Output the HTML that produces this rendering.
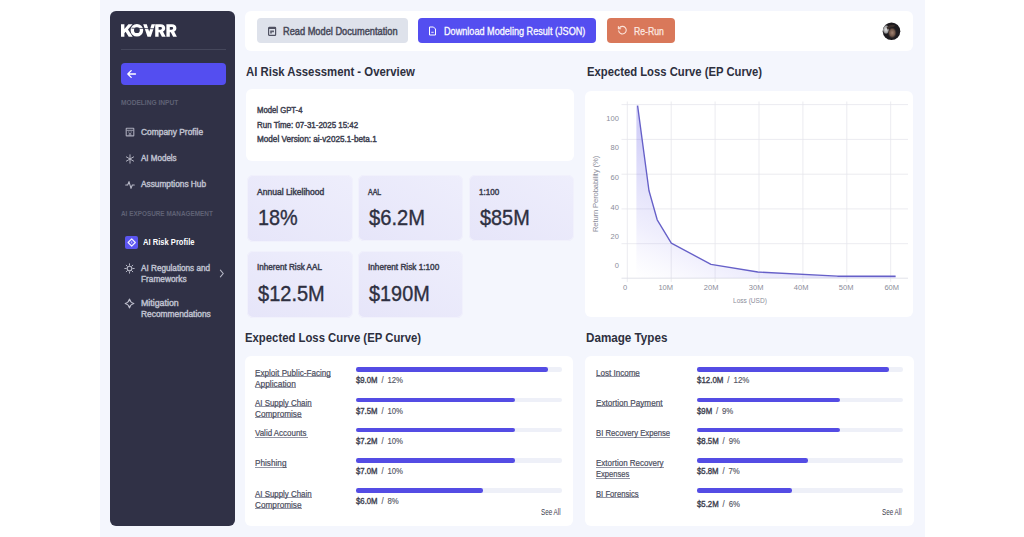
<!DOCTYPE html>
<html><head><meta charset="utf-8">
<style>
*{box-sizing:border-box;margin:0;padding:0}
html,body{width:1024px;height:537px;overflow:hidden;background:#fff;font-family:"Liberation Sans",sans-serif}
.a{position:absolute}
.t{position:absolute;white-space:nowrap;line-height:1;transform-origin:0 0}
.card{position:absolute;background:#fff;border-radius:6px}
.btn{position:absolute;border-radius:4px}
.mc{position:absolute;border-radius:6px;background:linear-gradient(30deg,#e6e5f9 0%,#eeeefc 100%);box-shadow:inset 0 0 0 1px #f1f1fc}
.track{position:absolute;height:4.4px;border-radius:2.2px;background:#eef0f8}
.fill{position:absolute;left:0;top:0;height:4.4px;border-radius:2.2px;background:#544ce4}
</style></head><body>
<div class="a" style="left:100px;top:0;width:825px;height:537px;background:#f4f6fd"></div>
<div class="a" style="left:110px;top:11px;width:125px;height:515px;background:#303146;border-radius:6px"></div>
<!-- logo -->
<svg class="a" style="left:118px;top:21px" width="64" height="20" viewBox="118 21 64 20">
<g fill="#fff">
<path d="M121 24.2h3.4v4.9l4-4.9h4.1l-4.5 5.3 4.7 7.2h-4l-3.1-4.9-1.2 1.4v3.5H121z"/>
<path fill-rule="evenodd" d="M136.9 23.9a6.3 6.3 0 1 1 0 12.6a6.3 6.3 0 1 1 0-12.6zM136.9 27.3a2.9 2.9 0 1 0 0 5.8a2.9 2.9 0 1 0 0-5.8z"/>
<path d="M143.2 24.2h3.6l2.4 7.6 2.4-7.6h3.5l-4.3 12.5h-3.3z"/>
<path d="M155.2 24.2h5.5c2.8 0 4.5 1.4 4.5 3.9 0 1.7-.8 2.9-2.2 3.5l2.7 5.1h-3.8l-2.3-4.5h-1v4.5h-3.4zm3.4 2.7v2.8h1.8c1 0 1.5-.5 1.5-1.4s-.5-1.4-1.5-1.4z"/>
<path d="M166.4 24.2h5.5c2.8 0 4.5 1.4 4.5 3.9 0 1.7-.8 2.9-2.2 3.5l2.7 5.1h-3.8l-2.3-4.5h-1v4.5h-3.4zm3.4 2.7v2.8h1.8c1 0 1.5-.5 1.5-1.4s-.5-1.4-1.5-1.4z"/>
</g>
<path d="M131.5 28.2 L154.5 28.8" stroke="#303146" stroke-width="0.8"/>
</svg>
<div class="a" style="left:121px;top:49px;width:105px;height:1px;background:#45475b"></div>
<div class="a" style="left:121px;top:63px;width:105px;height:22px;border-radius:4px;background:#544ef0"></div>
<svg class="a" style="left:126px;top:69px" width="11" height="10" viewBox="0 0 11 10"><path d="M9.5 5H2M5.2 1.6L1.8 5l3.4 3.4" fill="none" stroke="#fff" stroke-width="1.3" stroke-linecap="round" stroke-linejoin="round"/></svg>
<svg class="a" style="left:125px;top:127px" width="10" height="10" viewBox="0 0 10 10"><rect x="1.2" y="1.3" width="7.6" height="7.6" rx="0.5" fill="none" stroke="#a9aaba" stroke-width="1.1"/><path d="M1.5 3.3h7" stroke="#a9aaba" stroke-width="0.9"/><path d="M3.2 5h1.2M5.6 5h1.2M4.2 8.8V6.6h1.6v2.2" fill="none" stroke="#a9aaba" stroke-width="0.9"/></svg>
<svg class="a" style="left:125px;top:154px" width="10" height="10" viewBox="0 0 10 10"><path d="M5 0.8v8.4M1.4 2.9l7.2 4.2M8.6 2.9L1.4 7.1" stroke="#b9bac8" stroke-width="0.95" fill="none" stroke-linecap="round"/></svg>
<svg class="a" style="left:125px;top:180px" width="10" height="10" viewBox="0 0 10 10"><path d="M0.7 5h2l1.3-3.4 2 6.8 1.3-3.4h2" stroke="#b9bac8" stroke-width="1.05" fill="none" stroke-linejoin="round" stroke-linecap="round"/></svg>
<div class="a" style="left:125px;top:236px;width:13px;height:13px;border-radius:2px;background:#5b55f0"></div>
<svg class="a" style="left:125px;top:236px" width="13" height="13" viewBox="0 0 13 13"><path d="M6.7 2.9L10.3 6.5 6.7 10.1 3.1 6.5Z" fill="none" stroke="#f2f1ff" stroke-width="1.25" stroke-linejoin="round"/><path d="M6.7 5.4v2" stroke="#e0deff" stroke-width="0.8"/></svg>
<svg class="a" style="left:124px;top:263px" width="11" height="11" viewBox="0 0 11 11"><circle cx="5.5" cy="5.5" r="2.3" fill="none" stroke="#b4b5c4" stroke-width="1.1"/><path d="M5.5 0.8v1.4M5.5 8.8v1.4M0.8 5.5h1.4M8.8 5.5h1.4M2.2 2.2l1 1M7.8 7.8l1 1M8.8 2.2l-1 1M3.2 7.8l-1 1" stroke="#b4b5c4" stroke-width="1" stroke-linecap="round"/></svg>
<svg class="a" style="left:219px;top:269px" width="6" height="9" viewBox="0 0 6 9"><path d="M1.4 1.2l2.8 3.3-2.8 3.3" stroke="#b4b5c4" stroke-width="1.1" fill="none" stroke-linecap="round"/></svg>
<svg class="a" style="left:124px;top:298px" width="11" height="11" viewBox="0 0 11 11"><path d="M5.5 1.2Q6.3 4.7 9.8 5.5Q6.3 6.3 5.5 9.8Q4.7 6.3 1.2 5.5Q4.7 4.7 5.5 1.2Z" fill="none" stroke="#bdbecc" stroke-width="1.2" stroke-linejoin="round"/></svg>

<!-- top bar -->
<div class="card" style="left:245px;top:11px;width:668px;height:40px"></div>
<div class="btn" style="left:257px;top:18px;width:151px;height:25px;background:#dee2eb"></div>
<div class="btn" style="left:418px;top:18px;width:178px;height:25px;background:#544ef0"></div>
<div class="btn" style="left:607px;top:18px;width:68px;height:25px;background:#d9785a"></div>
<svg class="a" style="left:267px;top:26px" width="10" height="10" viewBox="0 0 10 10"><rect x="1.6" y="1.4" width="7" height="8" rx="0.7" fill="none" stroke="#505262" stroke-width="1.2"/><path d="M1.6 2.3h7" stroke="#505262" stroke-width="1.4"/><path d="M3.2 4.6h3.8v1.6H4.8v1.4H3.2z" fill="#5d5f6e"/></svg>
<svg class="a" style="left:428px;top:26px" width="9" height="10" viewBox="0 0 9 10"><path d="M1.5 1h4l2 2v6h-6z" fill="none" stroke="#fff" stroke-width="1"/><path d="M3.3 6.3h2.4" stroke="#fff" stroke-width="0.9"/></svg>
<svg class="a" style="left:617px;top:25px" width="11" height="11" viewBox="0 0 11 11"><path d="M2.2 3.2A3.8 3.8 0 1 1 1.7 5.8" fill="none" stroke="#fbe3da" stroke-width="1.1" stroke-linecap="round"/><path d="M1.4 1.6v2.2h2.2" fill="none" stroke="#fbe3da" stroke-width="1.1" stroke-linecap="round" stroke-linejoin="round"/></svg>
<svg class="a" style="left:882px;top:22px" width="19" height="19" viewBox="0 0 19 19">
<defs><clipPath id="avc"><circle cx="9.5" cy="9.3" r="8.8"/></clipPath>
<radialGradient id="avf" cx="0.5" cy="0.5" r="0.5"><stop offset="0" stop-color="#a08272"/><stop offset="0.6" stop-color="#6e5548"/><stop offset="1" stop-color="#3a2c28" stop-opacity="0"/></radialGradient>
<radialGradient id="avl" cx="0.5" cy="0.5" r="0.5"><stop offset="0" stop-color="#e8e8e8"/><stop offset="0.7" stop-color="#9a9a9c"/><stop offset="1" stop-color="#555" stop-opacity="0"/></radialGradient></defs>
<g clip-path="url(#avc)">
<rect width="19" height="19" fill="#1d1b1f"/>
<ellipse cx="4" cy="7.5" rx="3.6" ry="5" fill="url(#avl)"/>
<ellipse cx="10.2" cy="10.8" rx="4.6" ry="5.8" fill="url(#avf)"/>
<path d="M4.5 5.5Q8 1.5 13.5 3.5Q12 5.5 9 5.2Q7 6 6 8Z" fill="#3b302c"/>
</g>
</svg>

<!-- info card -->
<div class="card" style="left:246px;top:89px;width:328px;height:71.5px"></div>
<!-- metric cards -->
<div class="mc" style="left:246.5px;top:175px;width:106.5px;height:67px"></div>
<div class="mc" style="left:357.5px;top:175px;width:105.5px;height:66px"></div>
<div class="mc" style="left:468.5px;top:175px;width:105.5px;height:66px"></div>
<div class="mc" style="left:246.5px;top:251px;width:106.5px;height:67px"></div>
<div class="mc" style="left:357.5px;top:251px;width:105.5px;height:66.5px"></div>

<!-- chart card -->
<div class="card" style="left:585px;top:90.5px;width:328px;height:226.5px"></div>
<svg class="a" style="left:586px;top:90px" width="327" height="228" viewBox="586 90 327 228">
<defs>
<linearGradient id="gf" x1="0.75" y1="0" x2="0" y2="1">
<stop offset="0" stop-color="#6a62e6" stop-opacity="0.5"/>
<stop offset="0.5" stop-color="#7a73ea" stop-opacity="0.3"/>
<stop offset="0.8" stop-color="#8f89ee" stop-opacity="0.14"/>
<stop offset="1" stop-color="#a9a4f2" stop-opacity="0.0"/>
</linearGradient>
</defs>
<g stroke="#e6e6ec" stroke-width="0.8">
<path d="M621.5 104.6H908M621.5 139.4H908M621.5 174.2H908M621.5 208.9H908M621.5 243.7H908"/>
<path d="M627.3 101.5V282M671.2 101.5V282M715.1 101.5V282M759 101.5V282M802.9 101.5V282M846.8 101.5V282M890.7 101.5V282"/>
</g>
<path d="M621.5 278.2H908" stroke="#dedfe6" stroke-width="0.9"/>
<path d="M637.6 105.6L649 190.8 657.2 219.8 671.3 243.2 711 264.3 757.8 272 837.5 276.2 895.6 276.2V278H636.4V105.6Z" fill="url(#gf)"/>
<path d="M637.6 105.6L649 190.8 657.2 219.8 671.3 243.2 711 264.3 757.8 272 837.5 276.2 895.6 276.2" fill="none" stroke="#6660c8" stroke-width="1.35" stroke-linejoin="round"/>
</svg>
<div class="t" style="left:595.5px;top:193.6px;font-size:7.6px;color:#8b8d9a;transform:translate(-50%,-50%) rotate(-90deg);transform-origin:50% 50%;letter-spacing:-0.1px">Return Perobability (%)</div>

<!-- bottom cards -->
<div class="card" style="left:245px;top:355.5px;width:328px;height:170px"></div>
<div class="card" style="left:585px;top:355.5px;width:328.5px;height:170.5px"></div>
<div class="a" style="left:255.4px;top:376.20px;width:76.0px;height:0.9px;background:#9496a5"></div>
<div class="a" style="left:255.4px;top:387.20px;width:41.0px;height:0.9px;background:#9496a5"></div>
<div class="track" style="left:355.8px;top:367.40px;width:206px"><div class="fill" style="width:192px"></div></div>
<div class="a" style="left:255.4px;top:406.45px;width:56.8px;height:0.9px;background:#9496a5"></div>
<div class="a" style="left:255.4px;top:417.45px;width:46.7px;height:0.9px;background:#9496a5"></div>
<div class="track" style="left:355.8px;top:397.65px;width:206px"><div class="fill" style="width:159px"></div></div>
<div class="a" style="left:255.4px;top:436.70px;width:52.5px;height:0.9px;background:#9496a5"></div>
<div class="track" style="left:355.8px;top:427.90px;width:206px"><div class="fill" style="width:159px"></div></div>
<div class="a" style="left:255.4px;top:466.95px;width:31.6px;height:0.9px;background:#9496a5"></div>
<div class="track" style="left:355.8px;top:458.15px;width:206px"><div class="fill" style="width:159px"></div></div>
<div class="a" style="left:255.4px;top:497.20px;width:56.8px;height:0.9px;background:#9496a5"></div>
<div class="a" style="left:255.4px;top:508.20px;width:46.7px;height:0.9px;background:#9496a5"></div>
<div class="track" style="left:355.8px;top:488.40px;width:206px"><div class="fill" style="width:127px"></div></div>
<div class="a" style="left:596.2px;top:376.20px;width:44.0px;height:0.9px;background:#9496a5"></div>
<div class="track" style="left:696.6px;top:367.40px;width:206px"><div class="fill" style="width:192px"></div></div>
<div class="a" style="left:596.2px;top:406.45px;width:67.0px;height:0.9px;background:#9496a5"></div>
<div class="track" style="left:696.6px;top:397.65px;width:206px"><div class="fill" style="width:143px"></div></div>
<div class="a" style="left:596.2px;top:436.70px;width:74.3px;height:0.9px;background:#9496a5"></div>
<div class="track" style="left:696.6px;top:427.90px;width:206px"><div class="fill" style="width:143px"></div></div>
<div class="a" style="left:596.2px;top:466.95px;width:68.2px;height:0.9px;background:#9496a5"></div>
<div class="a" style="left:596.2px;top:477.95px;width:33.8px;height:0.9px;background:#9496a5"></div>
<div class="track" style="left:696.6px;top:458.15px;width:206px"><div class="fill" style="width:111px"></div></div>
<div class="a" style="left:596.2px;top:497.20px;width:43.2px;height:0.9px;background:#9496a5"></div>
<div class="track" style="left:696.6px;top:488.40px;width:206px"><div class="fill" style="width:95px"></div></div>
<div class="t" style="left:121.00px;top:99.39px;font-size:7.826px;font-weight:700;color:#5f6175;transform:scaleX(0.8449);">MODELING INPUT</div>
<div class="t" style="left:141.00px;top:128.08px;font-size:9.130px;font-weight:400;color:#bfc0ce;transform:scaleX(0.9202);-webkit-text-stroke:0.45px #bfc0ce">Company Profile</div>
<div class="t" style="left:141.00px;top:154.28px;font-size:9.130px;font-weight:400;color:#bfc0ce;transform:scaleX(0.8778);-webkit-text-stroke:0.45px #bfc0ce">AI Models</div>
<div class="t" style="left:141.00px;top:180.28px;font-size:9.130px;font-weight:400;color:#bfc0ce;transform:scaleX(0.9099);-webkit-text-stroke:0.45px #bfc0ce">Assumptions Hub</div>
<div class="t" style="left:121.00px;top:209.79px;font-size:7.826px;font-weight:700;color:#5f6175;transform:scaleX(0.8167);">AI EXPOSURE MANAGEMENT</div>
<div class="t" style="left:142.70px;top:238.28px;font-size:9.130px;font-weight:700;color:#ffffff;transform:scaleX(0.8318);">AI Risk Profile</div>
<div class="t" style="left:141.00px;top:264.08px;font-size:9.130px;font-weight:400;color:#bfc0ce;transform:scaleX(0.8957);-webkit-text-stroke:0.45px #bfc0ce">AI Regulations and</div>
<div class="t" style="left:141.00px;top:274.98px;font-size:9.130px;font-weight:400;color:#bfc0ce;transform:scaleX(0.9086);-webkit-text-stroke:0.45px #bfc0ce">Frameworks</div>
<div class="t" style="left:141.00px;top:298.58px;font-size:9.130px;font-weight:400;color:#bfc0ce;transform:scaleX(0.9646);-webkit-text-stroke:0.45px #bfc0ce">Mitigation</div>
<div class="t" style="left:141.00px;top:309.98px;font-size:9.130px;font-weight:400;color:#bfc0ce;transform:scaleX(0.9175);-webkit-text-stroke:0.45px #bfc0ce">Recommendations</div>
<div class="t" style="left:283.40px;top:26.73px;font-size:10.145px;font-weight:400;color:#474959;transform:scaleX(0.9129);-webkit-text-stroke:0.45px #474959">Read Model Documentation</div>
<div class="t" style="left:443.60px;top:26.73px;font-size:10.145px;font-weight:400;color:#fbfaff;transform:scaleX(0.9002);-webkit-text-stroke:0.3px #fbfaff">Download Modeling Result (JSON)</div>
<div class="t" style="left:633.70px;top:26.73px;font-size:10.145px;font-weight:400;color:#fde9e2;transform:scaleX(0.8553);-webkit-text-stroke:0.25px #fde9e2">Re-Run</div>
<div class="t" style="left:246.10px;top:65.18px;font-size:13.043px;font-weight:700;color:#2d2f3e;transform:scaleX(0.8719);">AI Risk Assessment - Overview</div>
<div class="t" style="left:586.50px;top:65.28px;font-size:13.043px;font-weight:700;color:#2d2f3e;transform:scaleX(0.8645);">Expected Loss Curve (EP Curve)</div>
<div class="t" style="left:245.00px;top:330.98px;font-size:13.043px;font-weight:700;color:#2d2f3e;transform:scaleX(0.8694);">Expected Loss Curve (EP Curve)</div>
<div class="t" style="left:585.60px;top:330.98px;font-size:13.043px;font-weight:700;color:#2d2f3e;transform:scaleX(0.8946);">Damage Types</div>
<div class="t" style="left:257.00px;top:105.73px;font-size:8.841px;font-weight:400;color:#3d3f50;transform:scaleX(0.8734);-webkit-text-stroke:0.45px #3d3f50">Model GPT-4</div>
<div class="t" style="left:257.00px;top:120.53px;font-size:8.841px;font-weight:400;color:#3d3f50;transform:scaleX(0.9002);-webkit-text-stroke:0.45px #3d3f50">Run Time: 07-31-2025 15:42</div>
<div class="t" style="left:257.00px;top:135.33px;font-size:8.841px;font-weight:400;color:#3d3f50;transform:scaleX(0.9240);-webkit-text-stroke:0.45px #3d3f50">Model Version: ai-v2025.1-beta.1</div>
<div class="t" style="left:257.40px;top:187.65px;font-size:8.696px;font-weight:400;color:#3d3f50;transform:scaleX(0.9803);-webkit-text-stroke:0.45px #3d3f50">Annual Likelihood</div>
<div class="t" style="left:368.30px;top:187.85px;font-size:8.696px;font-weight:400;color:#3d3f50;transform:scaleX(0.8017);-webkit-text-stroke:0.45px #3d3f50">AAL</div>
<div class="t" style="left:478.90px;top:187.85px;font-size:8.696px;font-weight:400;color:#3d3f50;transform:scaleX(0.9266);-webkit-text-stroke:0.45px #3d3f50">1:100</div>
<div class="t" style="left:257.40px;top:262.85px;font-size:8.696px;font-weight:400;color:#3d3f50;transform:scaleX(0.9332);-webkit-text-stroke:0.45px #3d3f50">Inherent Risk AAL</div>
<div class="t" style="left:368.30px;top:262.85px;font-size:8.696px;font-weight:400;color:#3d3f50;transform:scaleX(0.9456);-webkit-text-stroke:0.45px #3d3f50">Inherent Risk 1:100</div>
<div class="t" style="left:257.76px;top:207.22px;font-size:21.159px;font-weight:400;color:#2e3041;transform:scaleX(0.9394);-webkit-text-stroke:0.35px #2e3041">18%</div>
<div class="t" style="left:368.80px;top:206.92px;font-size:21.159px;font-weight:400;color:#2e3041;transform:scaleX(0.9520);-webkit-text-stroke:0.35px #2e3041">$6.2M</div>
<div class="t" style="left:479.80px;top:206.92px;font-size:21.159px;font-weight:400;color:#2e3041;transform:scaleX(0.9401);-webkit-text-stroke:0.35px #2e3041">$85M</div>
<div class="t" style="left:258.30px;top:283.22px;font-size:21.159px;font-weight:400;color:#2e3041;transform:scaleX(0.9463);-webkit-text-stroke:0.35px #2e3041">$12.5M</div>
<div class="t" style="left:368.80px;top:282.72px;font-size:21.159px;font-weight:400;color:#2e3041;transform:scaleX(0.9392);-webkit-text-stroke:0.35px #2e3041">$190M</div>
<div class="t" style="left:255.40px;top:368.55px;font-size:8.696px;font-weight:400;color:#4a4c5d;transform:scaleX(0.9350);-webkit-text-stroke:0.2px #4a4c5d">Exploit Public-Facing</div>
<div class="t" style="left:255.40px;top:379.55px;font-size:8.696px;font-weight:400;color:#4a4c5d;transform:scaleX(0.9609);-webkit-text-stroke:0.2px #4a4c5d">Application</div>
<div class="t" style="left:356.20px;top:376.35px;font-size:8.696px;font-weight:400;color:#3b3d4d;transform:scaleX(0.8921);"><span style="-webkit-text-stroke:0.35px #3b3d4d">$9.0M</span><span style="color:#555766;-webkit-text-stroke:0.15px #555766"> / 12%</span></div>
<div class="t" style="left:255.40px;top:398.80px;font-size:8.696px;font-weight:400;color:#4a4c5d;transform:scaleX(0.9093);-webkit-text-stroke:0.2px #4a4c5d">AI Supply Chain</div>
<div class="t" style="left:255.40px;top:409.80px;font-size:8.696px;font-weight:400;color:#4a4c5d;transform:scaleX(0.9452);-webkit-text-stroke:0.2px #4a4c5d">Compromise</div>
<div class="t" style="left:356.20px;top:406.60px;font-size:8.696px;font-weight:400;color:#3b3d4d;transform:scaleX(0.8921);"><span style="-webkit-text-stroke:0.35px #3b3d4d">$7.5M</span><span style="color:#555766;-webkit-text-stroke:0.15px #555766"> / 10%</span></div>
<div class="t" style="left:255.40px;top:429.05px;font-size:8.696px;font-weight:400;color:#4a4c5d;transform:scaleX(0.9134);-webkit-text-stroke:0.2px #4a4c5d">Valid Accounts</div>
<div class="t" style="left:356.20px;top:436.85px;font-size:8.696px;font-weight:400;color:#3b3d4d;transform:scaleX(0.8921);"><span style="-webkit-text-stroke:0.35px #3b3d4d">$7.2M</span><span style="color:#555766;-webkit-text-stroke:0.15px #555766"> / 10%</span></div>
<div class="t" style="left:255.40px;top:459.30px;font-size:8.696px;font-weight:400;color:#4a4c5d;transform:scaleX(0.9435);-webkit-text-stroke:0.2px #4a4c5d">Phishing</div>
<div class="t" style="left:356.20px;top:467.10px;font-size:8.696px;font-weight:400;color:#3b3d4d;transform:scaleX(0.8921);"><span style="-webkit-text-stroke:0.35px #3b3d4d">$7.0M</span><span style="color:#555766;-webkit-text-stroke:0.15px #555766"> / 10%</span></div>
<div class="t" style="left:255.40px;top:489.55px;font-size:8.696px;font-weight:400;color:#4a4c5d;transform:scaleX(0.9093);-webkit-text-stroke:0.2px #4a4c5d">AI Supply Chain</div>
<div class="t" style="left:255.40px;top:500.55px;font-size:8.696px;font-weight:400;color:#4a4c5d;transform:scaleX(0.9452);-webkit-text-stroke:0.2px #4a4c5d">Compromise</div>
<div class="t" style="left:356.20px;top:497.35px;font-size:8.696px;font-weight:400;color:#3b3d4d;transform:scaleX(0.8944);"><span style="-webkit-text-stroke:0.35px #3b3d4d">$6.0M</span><span style="color:#555766;-webkit-text-stroke:0.15px #555766"> / 8%</span></div>
<div class="t" style="left:541.10px;top:507.55px;font-size:8.696px;font-weight:400;color:#3b3d4d;transform:scaleX(0.7247);">See All</div>
<div class="t" style="left:596.20px;top:368.55px;font-size:8.696px;font-weight:400;color:#4a4c5d;transform:scaleX(0.9265);-webkit-text-stroke:0.2px #4a4c5d">Lost Income</div>
<div class="t" style="left:697.00px;top:376.35px;font-size:8.696px;font-weight:400;color:#3b3d4d;transform:scaleX(0.9110);"><span style="-webkit-text-stroke:0.35px #3b3d4d">$12.0M</span><span style="color:#555766;-webkit-text-stroke:0.15px #555766"> / 12%</span></div>
<div class="t" style="left:596.20px;top:398.80px;font-size:8.696px;font-weight:400;color:#4a4c5d;transform:scaleX(0.9362);-webkit-text-stroke:0.2px #4a4c5d">Extortion Payment</div>
<div class="t" style="left:697.00px;top:406.60px;font-size:8.696px;font-weight:400;color:#3b3d4d;transform:scaleX(0.8939);"><span style="-webkit-text-stroke:0.35px #3b3d4d">$9M</span><span style="color:#555766;-webkit-text-stroke:0.15px #555766"> / 9%</span></div>
<div class="t" style="left:596.20px;top:429.05px;font-size:8.696px;font-weight:400;color:#4a4c5d;transform:scaleX(0.8876);-webkit-text-stroke:0.2px #4a4c5d">BI Recovery Expense</div>
<div class="t" style="left:697.00px;top:436.85px;font-size:8.696px;font-weight:400;color:#3b3d4d;transform:scaleX(0.8985);"><span style="-webkit-text-stroke:0.35px #3b3d4d">$8.5M</span><span style="color:#555766;-webkit-text-stroke:0.15px #555766"> / 9%</span></div>
<div class="t" style="left:596.20px;top:459.30px;font-size:8.696px;font-weight:400;color:#4a4c5d;transform:scaleX(0.9210);-webkit-text-stroke:0.2px #4a4c5d">Extortion Recovery</div>
<div class="t" style="left:596.20px;top:470.30px;font-size:8.696px;font-weight:400;color:#4a4c5d;transform:scaleX(0.8709);-webkit-text-stroke:0.2px #4a4c5d">Expenses</div>
<div class="t" style="left:697.00px;top:467.10px;font-size:8.696px;font-weight:400;color:#3b3d4d;transform:scaleX(0.8944);"><span style="-webkit-text-stroke:0.35px #3b3d4d">$5.8M</span><span style="color:#555766;-webkit-text-stroke:0.15px #555766"> / 7%</span></div>
<div class="t" style="left:596.20px;top:489.55px;font-size:8.696px;font-weight:400;color:#4a4c5d;transform:scaleX(0.8828);-webkit-text-stroke:0.2px #4a4c5d">BI Forensics</div>
<div class="t" style="left:697.00px;top:500.35px;font-size:8.696px;font-weight:400;color:#3b3d4d;transform:scaleX(0.8985);"><span style="-webkit-text-stroke:0.35px #3b3d4d">$5.2M</span><span style="color:#555766;-webkit-text-stroke:0.15px #555766"> / 6%</span></div>
<div class="t" style="left:881.90px;top:507.55px;font-size:8.696px;font-weight:400;color:#3b3d4d;transform:scaleX(0.7247);">See All</div>
<div class="t" style="left:606.34px;top:114.93px;font-size:7.536px;font-weight:400;color:#8b8d9a;">100</div>
<div class="t" style="left:610.52px;top:144.43px;font-size:7.536px;font-weight:400;color:#8b8d9a;">80</div>
<div class="t" style="left:610.52px;top:173.63px;font-size:7.536px;font-weight:400;color:#8b8d9a;">60</div>
<div class="t" style="left:610.52px;top:203.63px;font-size:7.536px;font-weight:400;color:#8b8d9a;">40</div>
<div class="t" style="left:610.52px;top:233.13px;font-size:7.536px;font-weight:400;color:#8b8d9a;">20</div>
<div class="t" style="left:614.70px;top:262.23px;font-size:7.536px;font-weight:400;color:#8b8d9a;">0</div>
<div class="t" style="left:623.00px;top:283.73px;font-size:7.536px;font-weight:400;color:#8b8d9a;">0</div>
<div class="t" style="left:658.42px;top:283.73px;font-size:7.536px;font-weight:400;color:#8b8d9a;">10M</div>
<div class="t" style="left:703.82px;top:283.73px;font-size:7.536px;font-weight:400;color:#8b8d9a;">20M</div>
<div class="t" style="left:748.82px;top:283.73px;font-size:7.536px;font-weight:400;color:#8b8d9a;">30M</div>
<div class="t" style="left:793.82px;top:283.73px;font-size:7.536px;font-weight:400;color:#8b8d9a;">40M</div>
<div class="t" style="left:838.82px;top:283.73px;font-size:7.536px;font-weight:400;color:#8b8d9a;">50M</div>
<div class="t" style="left:884.42px;top:283.73px;font-size:7.536px;font-weight:400;color:#8b8d9a;">60M</div>
<div class="t" style="left:732.80px;top:297.09px;font-size:7.826px;font-weight:400;color:#8b8d9a;transform:scaleX(0.8389);">Loss (USD)</div>
</body></html>
